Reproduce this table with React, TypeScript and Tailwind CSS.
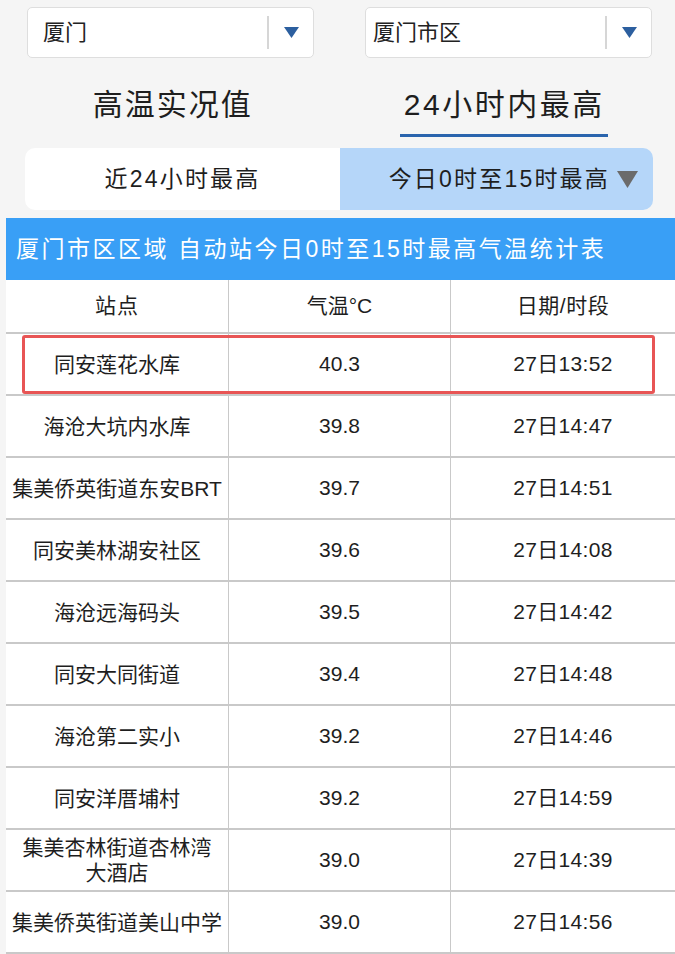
const FONT = "font-['Liberation_Sans','Noto_Sans_CJK_SC',sans-serif]";

const ROWS = [
  { name: ["同安莲花水库"], temp: "40.3", time: "27日13:52", mark: true },
  { name: ["海沧大坑内水库"], temp: "39.8", time: "27日14:47" },
  { name: ["集美侨英街道东安BRT"], temp: "39.7", time: "27日14:51" },
  { name: ["同安美林湖安社区"], temp: "39.6", time: "27日14:08" },
  { name: ["海沧远海码头"], temp: "39.5", time: "27日14:42" },
  { name: ["同安大同街道"], temp: "39.4", time: "27日14:48" },
  { name: ["海沧第二实小"], temp: "39.2", time: "27日14:46" },
  { name: ["同安洋厝埔村"], temp: "39.2", time: "27日14:59" },
  { name: ["集美杏林街道杏林湾", "大酒店"], temp: "39.0", time: "27日14:39" },
  { name: ["集美侨英街道美山中学"], temp: "39.0", time: "27日14:56" },
];

function Select({ label }: { label: string }) {
  return (
    <div className="w-[287px] h-[51px] bg-white border border-[#dedede] rounded-[5px] flex items-center">
      <span className="flex-1 pl-[7px] text-[22px] text-[#222]">{label}</span>
      <div className="w-[2px] h-[33px] bg-[#d6d6d6]" />
      <div className="w-[44px] flex justify-center">
        <svg width="15" height="11" viewBox="0 0 15 11">
          <path d="M0 0 H15 L7.5 11 Z" fill="#2c5f9f" />
        </svg>
      </div>
    </div>
  );
}

export default function App() {
  return (
    <div className={`${FONT} min-h-[954px] bg-[#f5f5f5] overflow-hidden`}>
      <div className="flex gap-[51px] pt-[7px] pl-[27px]">
        <div className="[&>div>span]:pl-[15px]"><Select label="厦门" /></div>
        <Select label="厦门市区" />
      </div>

      <div className="grid grid-cols-2 h-[90px]">
        <div className="flex justify-center pt-[24px] pl-[8px]">
          <span className="text-[30px] tracking-[2px] text-[#1e1e1e]">高温实况值</span>
        </div>
        <div className="flex flex-col items-center pt-[24px] pr-[4px]">
          <span className="text-[30px] tracking-[2.5px] text-[#1e1e1e] h-[44px]">24小时内最高</span>
          <div className="w-[208px] h-[3px] bg-[#2a64ad] mt-[8px]" />
        </div>
      </div>

      <div className="ml-[25px] w-[628px] h-[62px] rounded-[10px] overflow-hidden flex text-[23px] tracking-[2.2px] text-[#1e1e1e]">
        <div className="w-[315px] bg-white flex items-center justify-center">近24小时最高</div>
        <div className="flex-1 bg-[#b5d6f9] flex items-center justify-end pr-[15px] gap-[7px]">
          <span>今日0时至15时最高</span>
          <svg width="21" height="17" viewBox="0 0 21 17">
            <path d="M0 0 H21 L10.5 17 Z" fill="#6b6b6b" />
          </svg>
        </div>
      </div>

      <div className="ml-[6px] mt-[8px] h-[62px] bg-[#399ff6] flex items-center pl-[10px] text-[23px] tracking-[2.5px] text-white">
        厦门市区区域 自动站今日0时至15时最高气温统计表
      </div>

      <div className="ml-[6px] w-[669px] bg-white text-[#1e1e1e] text-[21px]">
        <div className="grid grid-cols-[223px_222px_224px] h-[54px] border-b-2 border-[#c9c9c9]">
          <div className="flex items-center justify-center border-r border-[#c9c9c9] tracking-[1px]">站点</div>
          <div className="flex items-center justify-center border-r border-[#c9c9c9]">气温°C</div>
          <div className="flex items-center justify-center tracking-[0.5px]">日期/时段</div>
        </div>
        {ROWS.map((r) => (
          <div
            key={r.name.join("") + r.time}
            className="relative grid grid-cols-[223px_222px_224px] h-[62px] border-b-2 border-[#c9c9c9]"
          >
            <div className="flex flex-col items-center justify-center border-r border-[#c9c9c9] leading-[25px]">
              {r.name.map((n) => (
                <span key={n}>{n}</span>
              ))}
            </div>
            <div className="flex items-center justify-center border-r border-[#c9c9c9]">{r.temp}</div>
            <div className="flex items-center justify-center tracking-[0.3px]">{r.time}</div>
            {r.mark && (
              <div className="absolute left-[16px] top-[1px] w-[633px] h-[59px] border-[3px] border-[#e85555] rounded-[3px]" />
            )}
          </div>
        ))}
      </div>
    </div>
  );
}
